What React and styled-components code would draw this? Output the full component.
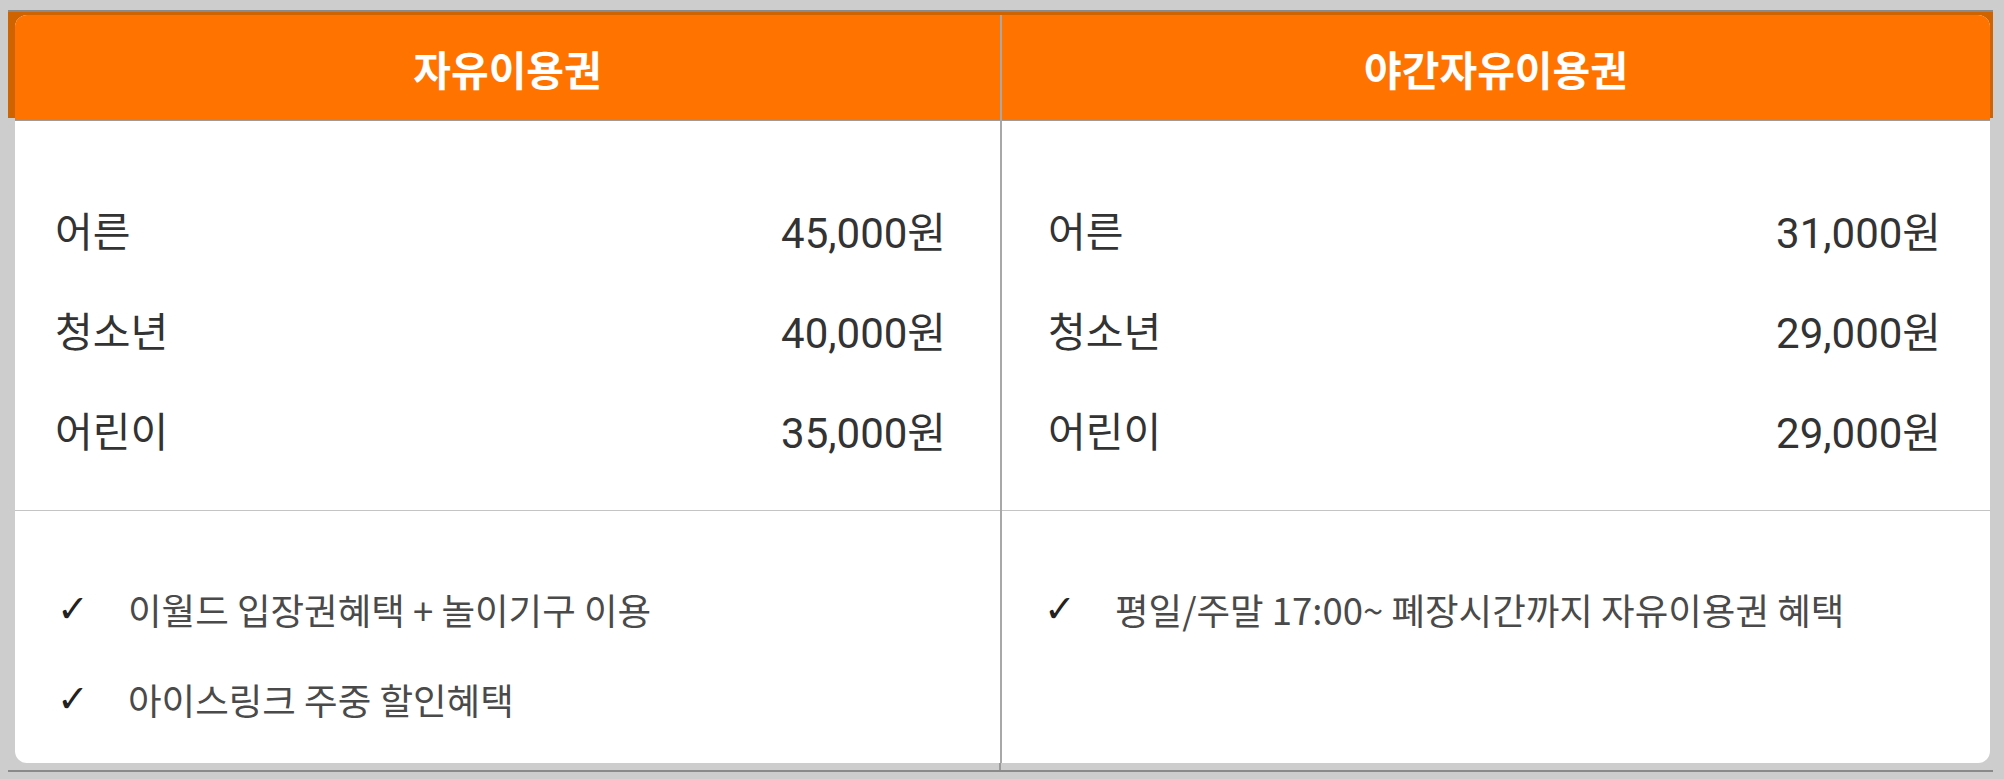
import styled, { createGlobalStyle } from 'styled-components';

const tickets = [
  {
    id: 'free',
    title: '자유이용권',
    prices: [
      { label: '어른', price: '45,000원' },
      { label: '청소년', price: '40,000원' },
      { label: '어린이', price: '35,000원' },
    ],
    benefits: ['이월드 입장권혜택 + 놀이기구 이용', '아이스링크 주중 할인혜택'],
  },
  {
    id: 'night',
    title: '야간자유이용권',
    prices: [
      { label: '어른', price: '31,000원' },
      { label: '청소년', price: '29,000원' },
      { label: '어린이', price: '29,000원' },
    ],
    benefits: ['평일/주말 17:00~ 폐장시간까지 자유이용권 혜택'],
  },
];

export default function App() {
  return (
    <>
      <GlobalStyle />
      <Page>
        <Frame>
          <Card>
            {tickets.map((ticket, i) => (
              <Column key={ticket.id} $first={i === 0}>
                <Head>{ticket.title}</Head>
                <PriceList $first={i === 0}>
                  {ticket.prices.map((row) => (
                    <PriceRow key={row.label}>
                      <span>{row.label}</span>
                      <Price>{row.price}</Price>
                    </PriceRow>
                  ))}
                </PriceList>
                <Benefits>
                  {ticket.benefits.map((text) => (
                    <Benefit key={text}>
                      <Check>✓</Check>
                      <span>{text}</span>
                    </Benefit>
                  ))}
                </Benefits>
              </Column>
            ))}
          </Card>
        </Frame>
      </Page>
    </>
  );
}

const GlobalStyle = createGlobalStyle`
  body {
    margin: 0;
    background: #cdcdcd;
    font-family: "Noto Sans CJK KR", "Noto Sans", sans-serif;
  }
`;

const Page = styled.div`
  padding: 10px 11px 0 8px;
  height: 779px;
  box-sizing: border-box;
`;

const Frame = styled.div`
  border-top: 2px solid #8a8a8a;
  border-bottom: 2px solid #8a8a8a;
  padding: 3px 3px 7px 7px;
  background:
    linear-gradient(#cf6300, #cf6300) 0 0 / 100% 106px no-repeat,
    linear-gradient(#9a9a9a, #9a9a9a) 991px 0 / 2px 100% no-repeat;
`;

const Card = styled.div`
  display: grid;
  grid-template-columns: 985px 1fr;
  background: #fff;
  border-radius: 12px;
  overflow: hidden;
  height: 748px;
`;

const Column = styled.div`
  display: flex;
  flex-direction: column;
  border-left: ${(p) => (p.$first ? 'none' : '2px solid #a8a8a8')};
`;

const Head = styled.div`
  height: 105px;
  background: #ff7300;
  border-bottom: 1px solid #9c9c9c;
  color: #fff;
  font-size: 41px;
  font-weight: 700;
  display: flex;
  align-items: center;
  justify-content: center;
`;

const PriceList = styled.div`
  height: 390px;
  box-sizing: border-box;
  padding: 58px ${(p) => (p.$first ? '54px' : '49px')} 0
    ${(p) => (p.$first ? '40px' : '46px')};
  border-bottom: 1px solid #c4c4c4;
`;

const PriceRow = styled.div`
  display: flex;
  justify-content: space-between;
  align-items: center;
  height: 100px;
  font-size: 41px;
  color: #333;
`;

const Price = styled.span`
  font-family: Roboto, "Noto Sans CJK KR", sans-serif;
  font-size: 42px;
`;

const Benefits = styled.div`
  flex: 1;
  padding: 53px 0 0 42px;
`;

const Benefit = styled.div`
  display: flex;
  align-items: center;
  height: 90px;
  font-size: 36.5px;
  color: #4a4a4a;
`;

const Check = styled.span`
  width: 71px;
  font-family: "DejaVu Sans", sans-serif;
  font-size: 38px;
  color: #222;
`;
